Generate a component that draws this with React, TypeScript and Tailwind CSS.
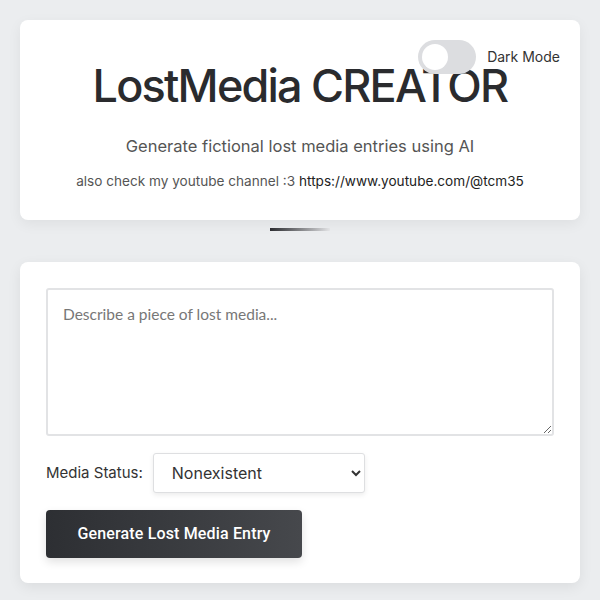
import { useState } from "react";

export default function App() {
  const [dark, setDark] = useState(false);
  const [status, setStatus] = useState("Nonexistent");

  return (
    <div className="min-h-screen bg-[#ebedef] px-5 pt-5 pb-4 font-['Inter',sans-serif] text-[#2b2c2f]">
      {/* Header card */}
      <header className="relative rounded-lg bg-white pt-[46px] pb-[29px] text-center shadow-[0_4px_14px_rgba(0,0,0,0.06)]">
        <div className="absolute top-5 right-5 flex items-center gap-[11px]">
          <button
            onClick={() => setDark(!dark)}
            className="relative h-[34px] w-[58px] rounded-full bg-[#dcdde0]"
          >
            <span className="absolute top-1 left-1 h-[26px] w-[26px] rounded-full bg-white" />
          </button>
          <span className="text-[14px] leading-4 text-[#333]">Dark Mode</span>
        </div>
        <h1 className="text-[45px] leading-[40px] font-medium tracking-[-0.04em] text-[#2a2b2e]">
          LostMedia CREATOR
        </h1>
        <p className="mt-[28px] text-[16.5px] leading-6 text-[#555]">
          Generate fictional lost media entries using AI
        </p>
        <p className="mt-[13px] text-[13.6px] leading-5 text-[#555]">
          also check my youtube channel :3{" "}
          <span className="text-[#222]">https://www.youtube.com/@tcm35</span>
        </p>
      </header>

      <div className="mx-auto mt-2 h-[3px] w-[60px] bg-gradient-to-r from-[#2e2f33] to-[#e6e7e9]" />

      {/* Generator form */}
      <main className="mt-[31px] rounded-lg bg-white px-[26px] pt-[26px] pb-[25px] shadow-[0_4px_14px_rgba(0,0,0,0.07)]">
        <textarea
          placeholder="Describe a piece of lost media..."
          className="block h-[148px] w-full resize-y rounded-[3px] border-2 border-[#e2e3e5] px-[15px] py-[13px] font-['Lato',sans-serif] text-[15.5px] placeholder:text-[#777] focus:outline-none"
        />
        <div className="mt-[17px] flex items-center gap-[10px]">
          <label className="text-[15px] text-[#333]">Media Status:</label>
          <select
            value={status}
            onChange={(e) => setStatus(e.target.value)}
            className="h-10 w-[212px] rounded-[3px] border border-[#dedfe1] bg-white pl-[14px] pr-2 text-[16px] text-[#333] shadow-[0_2px_5px_rgba(0,0,0,0.08)]"
          >
            <option>Nonexistent</option>
            <option>Partially Found</option>
            <option>Found</option>
          </select>
        </div>
        <button className="mt-[17px] h-12 w-[256px] rounded-[4px] bg-gradient-to-r from-[#2d2f33] to-[#46484c] font-['Roboto',sans-serif] text-[16px] font-medium tracking-[0.01em] text-white shadow-[0_4px_10px_rgba(0,0,0,0.12)]">
          Generate Lost Media Entry
        </button>
      </main>
    </div>
  );
}
